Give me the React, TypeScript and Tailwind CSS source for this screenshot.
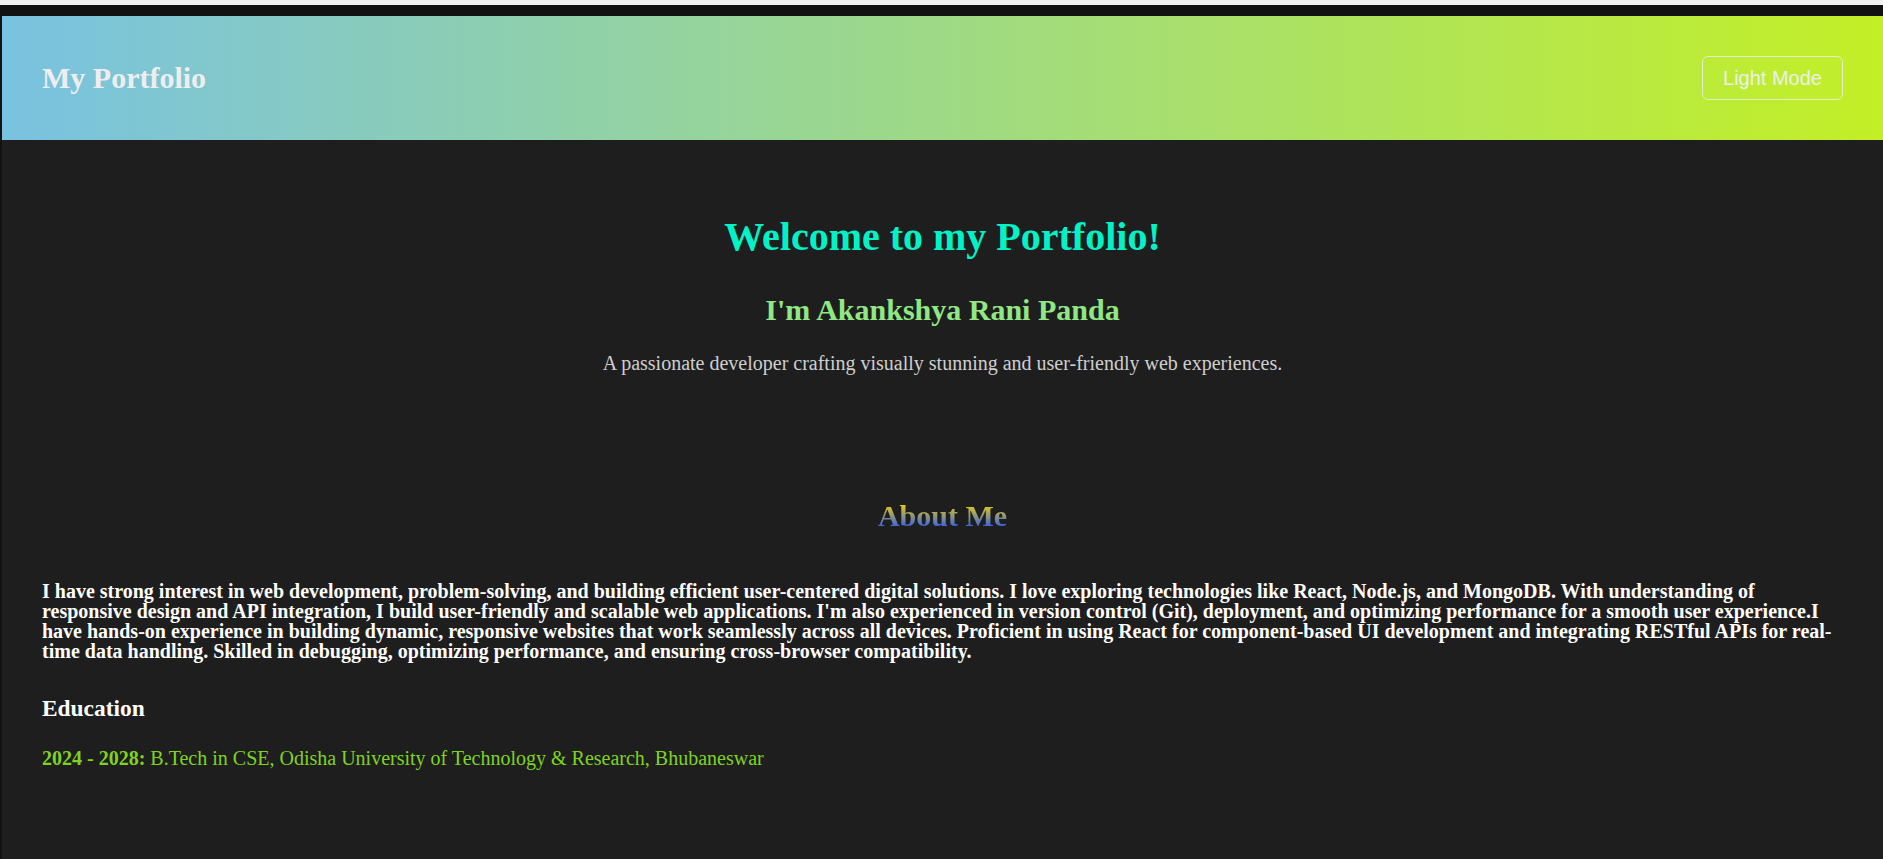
import React from "react";

export default function App() {
  const serif = { fontFamily: '"Liberation Serif", "Times New Roman", serif' };
  return (
    <div className="min-h-[859px] bg-[#121212]" style={serif}>
      <div className="h-[5px] bg-[#f2f2f2]" />
      <div className="pt-[11px] pl-[2px]">
        <header className="h-[124px] flex items-center justify-between px-[40px] bg-[linear-gradient(to_right,#79c2e1,#a2dc7c_55%,#c3ef26)]">
          <h1 className="text-[30px] font-bold text-[#eeeeee] leading-none">My Portfolio</h1>
          <button
            className="h-[44px] px-[20px] rounded-[6px] border border-[#eeeeeecc] text-[20px] text-[#eeeeee] bg-transparent"
            style={{ fontFamily: '"Liberation Sans", Arial, sans-serif' }}
          >
            Light Mode
          </button>
        </header>
        <main className="bg-[#1e1e1e] min-h-[719px] pb-[60px]">
          <section className="flex flex-col items-center pt-[74px]">
            <h2 className="text-[40px] font-bold text-[#00f3c8] leading-[46px]">Welcome to my Portfolio!</h2>
            <h3 className="mt-[33px] text-[30px] font-bold text-[#90e884] leading-[34px]">I'm Akankshya Rani Panda</h3>
            <p className="mt-[25px] text-[20px] text-[#cfcfcf] leading-[23px]">
              A passionate developer crafting visually stunning and user-friendly web experiences.
            </p>
          </section>
          <section className="px-[40px] pt-[124px]">
            <h2 className="text-center text-[30px] font-bold leading-[34px]">
              <span className="bg-[linear-gradient(to_bottom,#e2c81a_20%,#3561e6_85%)] bg-clip-text text-transparent">
                About Me
              </span>
            </h2>
            <p className="mt-[48px] text-[20px] font-bold text-white leading-[20px]">
              I have strong interest in web development, problem-solving, and building efficient user-centered digital solutions. I love exploring technologies like React, Node.js, and MongoDB. With understanding of responsive design and API integration, I build user-friendly and scalable web applications. I'm also experienced in version control (Git), deployment, and optimizing performance for a smooth user experience.I have hands-on experience in building dynamic, responsive websites that work seamlessly across all devices. Proficient in using React for component-based UI development and integrating RESTful APIs for real-time data handling. Skilled in debugging, optimizing performance, and ensuring cross-browser compatibility.
            </p>
            <h3 className="mt-[34px] text-[23.4px] font-bold text-white leading-[27px]">Education</h3>
            <p className="mt-[25px] text-[20px] text-[#7ed321] leading-[23px]">
              <strong>2024 - 2028:</strong> B.Tech in CSE, Odisha University of Technology &amp; Research, Bhubaneswar
            </p>
          </section>
        </main>
      </div>
    </div>
  );
}
